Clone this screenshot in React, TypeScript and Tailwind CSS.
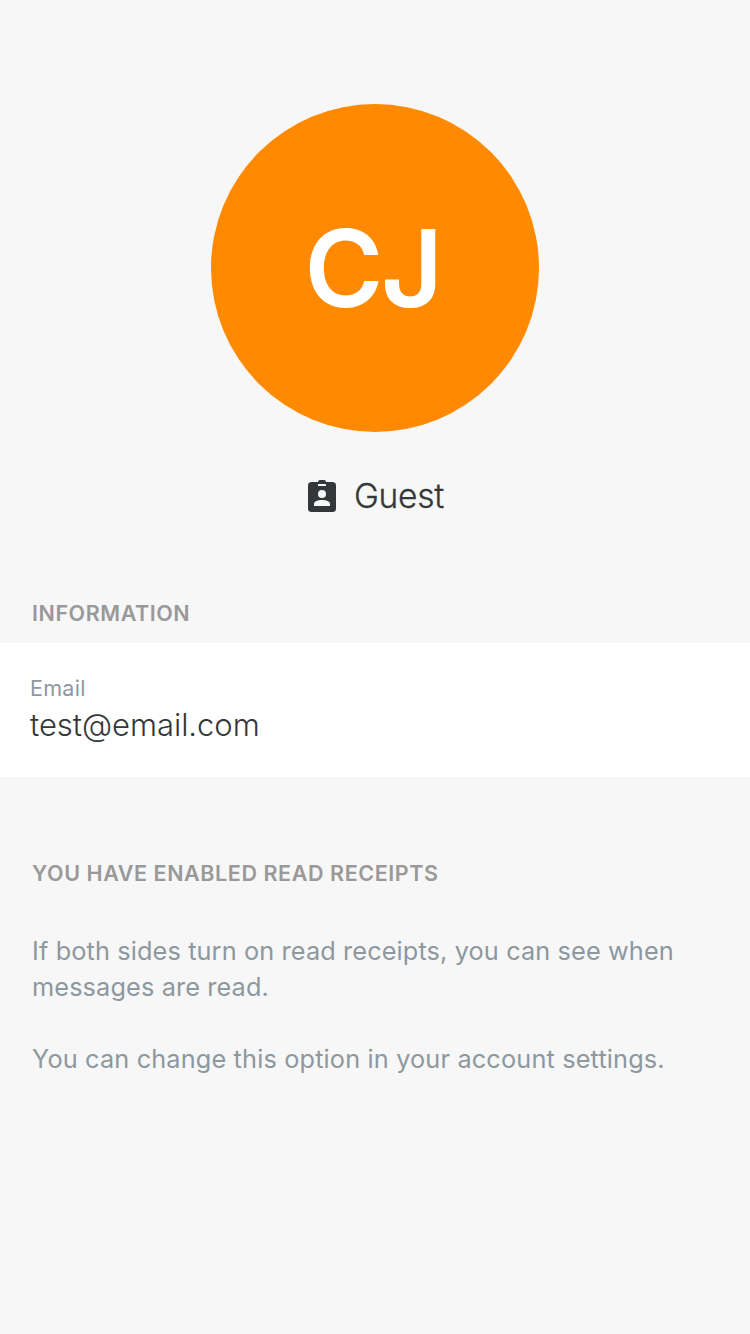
export default function App() {
  return (
    <main className="flex h-[1334px] w-[750px] flex-col bg-[#f7f7f7] font-['Inter',sans-serif] text-[#33373a]">
      <div className="mt-[104px] flex size-[328px] items-center justify-center self-center rounded-full bg-[#ff8900] pr-[5px]">
        <span className="text-[107px] leading-none font-semibold tracking-[-2.5px] text-white">CJ</span>
      </div>
      <div className="mt-11 flex h-10 items-center justify-center gap-[17px] pl-px">
        <svg width="30" height="34" viewBox="0 0 30 34" fill="none">
          <rect x="1" y="3" width="28" height="30" rx="3.5" fill="#33373a" />
          <rect x="11" y="1" width="8" height="6" rx="2" fill="#33373a" />
          <rect x="11" y="5" width="8" height="2" rx=".5" fill="#f7f7f7" />
          <circle cx="15" cy="15" r="4" fill="#f7f7f7" />
          <path d="M7 27v-2c0-3 4-4 8-4s8 1 8 4v2Z" fill="#f7f7f7" />
        </svg>
        <span className="text-[33.5px] leading-10 font-light tracking-[-0.25px] [-webkit-text-stroke:0.3px_#33373a]">Guest</span>
      </div>
      <h2 className="mt-[84px] ml-8 text-[21.5px] leading-[27px] font-semibold tracking-[0.56px] text-[#999999]">INFORMATION</h2>
      <section className="mt-4 h-[134px] bg-white px-[30px] pt-[32px]">
        <p className="text-[21.5px] leading-[27px] tracking-[0.3px] text-[#8d989f]">Email</p>
        <p className="mt-[3px] text-[31px] leading-[39px] font-light tracking-[-0.05px]">test@email.com</p>
      </section>
      <section className="px-8 pt-[83px]">
        <h2 className="text-[21.5px] leading-[27px] font-semibold tracking-[0.58px] text-[#999999]">YOU HAVE ENABLED READ RECEIPTS</h2>
        <div className="mt-[46px] text-[25.3px] leading-9 tracking-[0.12px] text-[#8d989f]">
          <p>If both sides turn on read receipts, you can see when<br />messages are read.</p>
          <p className="mt-9 tracking-[0.15px]">You can change this option in your account settings.</p>
        </div>
      </section>
    </main>
  );
}
